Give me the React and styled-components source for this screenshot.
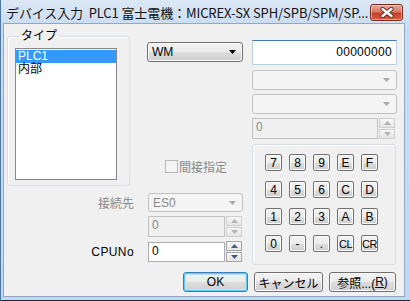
import React from 'react';
import styled, { createGlobalStyle } from 'styled-components';

const Global = createGlobalStyle`
    body {
        margin: 0;
        background: #c9dcf1;
        font-family: 'Liberation Sans', 'Noto Sans CJK JP', sans-serif;
        font-size: 12px;
    }
`;

const Window = styled.div`
    box-sizing: border-box;
    width: 410px;
    height: 301px;
    display: flex;
    flex-direction: column;
    background: linear-gradient(#dbe7f5, #c8dbf1 30px, #c3d8f0);
    border-left: 1px solid #4d78a6;
    border-bottom: 1px solid #1c2c40;
    overflow: hidden;
`;

const TitleBar = styled.div`
    height: 23px;
    flex: none;
    display: flex;
    align-items: center;
    justify-content: space-between;
    padding: 0 7px 0 5px;
`;

const Title = styled.div`
    font-family: 'Noto Sans CJK JP', sans-serif;
    font-size: 13px;
    color: #111;
    white-space: nowrap;
    margin-top: 1px;
    letter-spacing: -0.1px;
`;

const CloseButton = styled.div`
    box-sizing: border-box;
    width: 33px;
    height: 17px;
    margin-top: 2px;
    border: 1px solid #7a2b1f;
    border-radius: 3px;
    background: linear-gradient(#e9a999, #d97a66 45%, #c4402a 55%, #d75a40);
    box-shadow: inset 0 0 0 1px rgba(255, 220, 210, 0.55);
    display: flex;
    align-items: center;
    justify-content: center;
`;

const Client = styled.div`
    flex: 1;
    margin: 0 5px 3px 2px;
    background: #f0f0f0;
    border: 1px solid #8fa8c6;
    display: flex;
    flex-direction: column;
`;

const Main = styled.div`
    display: flex;
    padding: 5px 0 0 3px;
`;

const LeftPart = styled.div`
    width: 238px;
    display: flex;
    flex-direction: column;
`;

const TopRow = styled.div`
    display: flex;
`;

const GroupBox = styled.fieldset`
    box-sizing: border-box;
    width: 123px;
    height: 157px;
    margin: 0;
    padding: 5px 11px 5px 7px;
    border: 1px solid #d5dfe5;
    border-radius: 3px;
    box-shadow: inset 1px 1px 0 #fff;
`;

const Legend = styled.legend`
    padding: 0 2px;
    margin-left: 4px;
    line-height: 14px;
    font-size: 12px;
    color: #000;
`;

const ListBox = styled.div`
    box-sizing: border-box;
    width: 102px;
    height: 132px;
    background: #fff;
    border: 1px solid #828790;
    padding: 1px 0 0;
`;

const ListItem = styled.div`
    height: 13px;
    line-height: 13px;
    padding-left: 2px;
    color: ${p => (p.selected ? '#fff' : '#000')};
    background: ${p => (p.selected ? '#3399ff' : 'transparent')};
`;

const MiddleCol = styled.div`
    margin-left: 17px;
    width: 96px;
    display: flex;
    flex-direction: column;
`;

const Combo = styled.div`
    box-sizing: border-box;
    width: ${p => p.w}px;
    height: ${p => p.h}px;
    margin-top: ${p => p.mt || 0}px;
    border: 1px solid ${p => (p.disabled ? '#c2c2c2' : '#707070')};
    border-radius: 3px;
    background: ${p =>
        p.disabled
            ? '#f4f4f4'
            : 'linear-gradient(#f2f2f2, #ebebeb 50%, #dddddd 51%, #cfcfcf)'};
    box-shadow: inset 0 0 0 1px ${p => (p.disabled ? 'transparent' : '#fcfcfc')};
    display: flex;
    align-items: center;
    justify-content: space-between;
    padding: 0 6px 0 4px;
    color: ${p => (p.disabled ? '#8a8a8a' : '#000')};
`;

const Arrow = ({ color }) => (
    <svg width="7" height="4" viewBox="0 0 7 4">
        <path d="M0 0H7L3.5 4Z" fill={color} />
    </svg>
);

const CheckRow = styled.label`
    display: flex;
    align-items: center;
    margin: auto 0 11px 18px;
    color: #8a8a8a;
    white-space: nowrap;
`;

const CheckBox = styled.span`
    box-sizing: border-box;
    width: 13px;
    height: 13px;
    margin-right: 1px;
    border: 1px solid #b8b8b8;
    background: #f4f4f4;
`;

const FieldRow = styled.div`
    display: flex;
    align-items: center;
    margin-top: ${p => p.mt}px;
`;

const Label = styled.div`
    width: 127px;
    text-align: right;
    margin-right: 14px;
    color: ${p => (p.disabled ? '#8a8a8a' : '#000')};
    letter-spacing: ${p => (p.wide ? 0.4 : 0)}px;
`;

const Spin = styled.div`
    display: flex;
    align-items: center;
    width: ${p => p.w}px;
    margin-top: ${p => p.mt || 0}px;
`;

const TextBox = styled.div`
    box-sizing: border-box;
    flex: 1;
    height: ${p => p.h}px;
    border: 1px solid ${p => (p.disabled ? '#c2c2c2' : '#abadb3')};
    background: ${p => (p.disabled ? '#f0f0f0' : '#fff')};
    color: ${p => (p.disabled ? '#8a8a8a' : '#000')};
    padding: 2px 3px;
    line-height: 13px;
`;

const SpinButtons = styled.div`
    display: flex;
    flex-direction: column;
    gap: 1px;
    margin-left: 1px;
`;

const SpinButton = styled.div`
    box-sizing: border-box;
    width: 16px;
    height: 10px;
    border: 1px solid ${p => (p.disabled ? '#cfcfcf' : '#a7a7a7')};
    background: linear-gradient(#f7f7f7, #e4e4e4);
    display: flex;
    align-items: center;
    justify-content: center;
`;

const Tri = ({ up, color }) => (
    <svg width="7" height="4" viewBox="0 0 7 4">
        <path d={up ? 'M0 4H7L3.5 0Z' : 'M0 0H7L3.5 4Z'} fill={color} />
    </svg>
);

const SpinBox = ({ w, h, mt, disabled, value }) => {
    const c = disabled ? '#b3b3b3' : '#3f5a86';
    return (
        <Spin w={w} mt={mt}>
            <TextBox h={h} disabled={disabled}>{value}</TextBox>
            <SpinButtons>
                <SpinButton disabled={disabled}><Tri up color={c} /></SpinButton>
                <SpinButton disabled={disabled}><Tri color={c} /></SpinButton>
            </SpinButtons>
        </Spin>
    );
};

const RightPart = styled.div`
    width: 145px;
    margin-left: 7px;
    display: flex;
    flex-direction: column;
`;

const AddressBox = styled.div`
    box-sizing: border-box;
    height: 25px;
    margin-top: 11px;
    background: #fff;
    border: 1px solid #b5cfe7;
    border-top-color: #3d7bad;
    text-align: right;
    padding: 4px 4px 0 0;
    letter-spacing: 0.3px;
`;

const KeyPad = styled.div`
    box-sizing: border-box;
    height: 121px;
    margin-top: 5px;
    margin-right: 1px;
    border: 1px solid #d5dfe5;
    border-radius: 3px;
    box-shadow: inset 1px 1px 0 #fff;
    display: grid;
    grid-template-columns: repeat(5, 17px);
    grid-auto-rows: 17px;
    column-gap: 7px;
    row-gap: 10px;
    padding: 9px 0 0 12px;
`;

const Key = styled.div`
    box-sizing: border-box;
    border: 1px solid #707070;
    border-radius: 2px;
    background: linear-gradient(#f2f2f2, #ebebeb 50%, #dddddd 51%, #cfcfcf);
    box-shadow: inset 0 0 0 1px #fcfcfc;
    display: flex;
    align-items: center;
    justify-content: center;
    font-size: ${p => (p.small ? 11 : 12)}px;
    letter-spacing: ${p => (p.small ? -0.5 : 0)}px;
    color: #000;
`;

const ButtonRow = styled.div`
    display: flex;
    justify-content: flex-end;
    gap: 6px;
    margin-top: 7px;
    padding-right: 8px;
`;

const Button = styled.div`
    box-sizing: border-box;
    width: ${p => p.w}px;
    height: 20px;
    border: 1px solid ${p => (p.primary ? '#3c7fb1' : '#707070')};
    border-radius: 3px;
    background: linear-gradient(#f2f2f2, #ebebeb 50%, #dddddd 51%, #cfcfcf);
    box-shadow: inset 0 0 0 1px ${p => (p.primary ? '#5fcbf3' : '#fcfcfc')},
        inset 0 0 0 2px ${p => (p.primary ? '#b9e6f8' : 'transparent')};
    display: flex;
    align-items: center;
    justify-content: center;
    color: #000;
`;

const keys = ['7', '8', '9', 'E', 'F', '4', '5', '6', 'C', 'D', '1', '2', '3', 'A', 'B', '0', '-', '.', 'CL', 'CR'];

export default function App() {
    return (
        <>
            <Global />
            <Window>
                <TitleBar>
                    <Title>デバイス入力&nbsp;&nbsp;PLC1 富士電機：MICREX-SX SPH/SPB/SPM/SP...</Title>
                    <CloseButton>
                        <svg width="14" height="11" viewBox="0 0 14 11">
                            <path d="M2.5 2L11.5 9M11.5 2L2.5 9" stroke="#5a2a22" strokeWidth="4.2" strokeLinecap="round" />
                            <path d="M2.5 2L11.5 9M11.5 2L2.5 9" stroke="#fff" strokeWidth="2.4" strokeLinecap="round" />
                        </svg>
                    </CloseButton>
                </TitleBar>
                <Client>
                    <Main>
                        <LeftPart>
                            <TopRow>
                                <GroupBox>
                                    <Legend>タイプ</Legend>
                                    <ListBox>
                                        <ListItem selected>PLC1</ListItem>
                                        <ListItem>内部</ListItem>
                                    </ListBox>
                                </GroupBox>
                                <MiddleCol>
                                    <Combo w={96} h={20} mt={13}>
                                        <span>WM</span>
                                        <Arrow color="#000" />
                                    </Combo>
                                    <CheckRow>
                                        <CheckBox />
                                        間接指定
                                    </CheckRow>
                                </MiddleCol>
                            </TopRow>
                            <FieldRow mt={7}>
                                <Label disabled>接続先</Label>
                                <Combo w={95} h={19} disabled>
                                    <span>ES0</span>
                                    <Arrow color="#a8a8a8" />
                                </Combo>
                            </FieldRow>
                            <FieldRow mt={4}>
                                <Label />
                                <SpinBox w={94} h={21} disabled value="0" />
                            </FieldRow>
                            <FieldRow mt={4}>
                                <Label wide>CPUNo</Label>
                                <SpinBox w={94} h={20} value="0" />
                            </FieldRow>
                        </LeftPart>
                        <RightPart>
                            <AddressBox>00000000</AddressBox>
                            <Combo w={145} h={20} mt={5} disabled>
                                <span />
                                <Arrow color="#a8a8a8" />
                            </Combo>
                            <Combo w={145} h={20} mt={4} disabled>
                                <span />
                                <Arrow color="#a8a8a8" />
                            </Combo>
                            <SpinBox w={143} h={21} mt={4} disabled value="0" />
                            <KeyPad>
                                {keys.map(k => (
                                    <Key key={k} small={k.length > 1}>{k}</Key>
                                ))}
                            </KeyPad>
                        </RightPart>
                    </Main>
                    <ButtonRow>
                        <Button w={65} primary>OK</Button>
                        <Button w={69}>キャンセル</Button>
                        <Button w={67}>参照...(<u>R</u>)</Button>
                    </ButtonRow>
                </Client>
            </Window>
        </>
    );
}
